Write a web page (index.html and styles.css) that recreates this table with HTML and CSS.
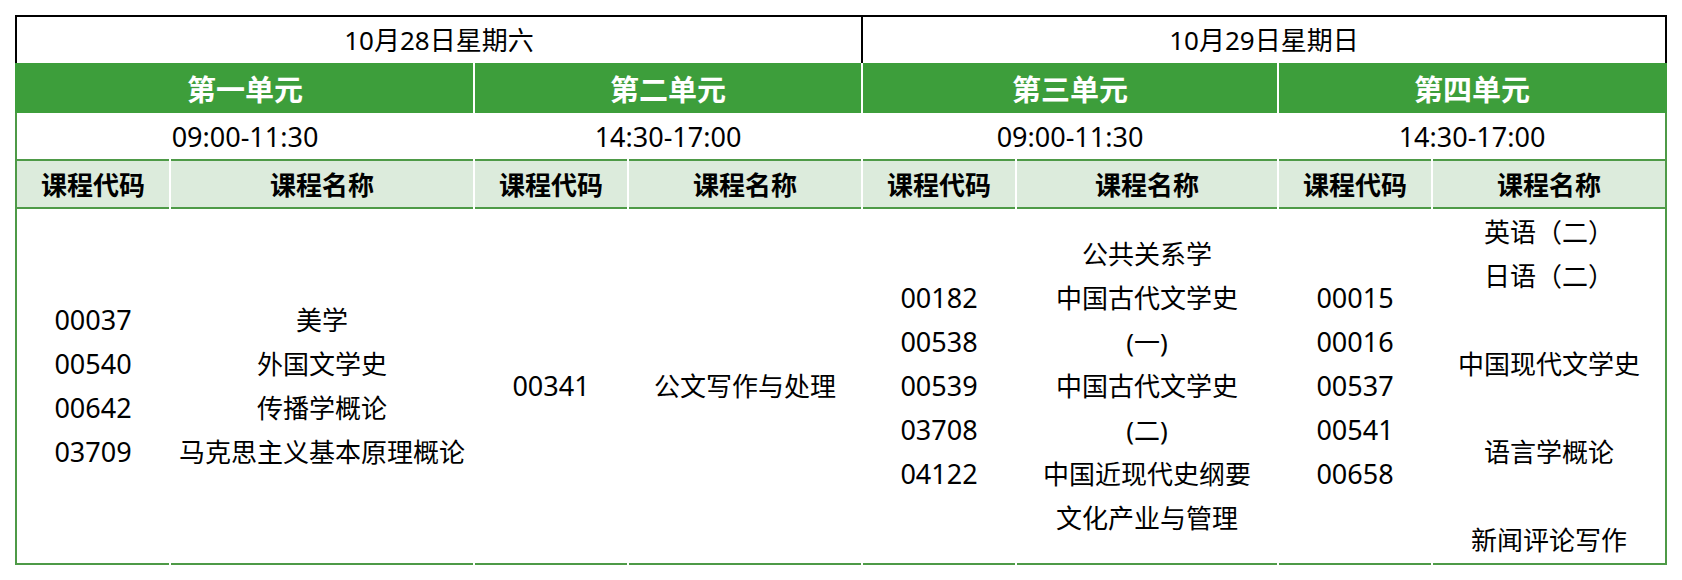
FILE: index.html
```html
<!DOCTYPE html>
<html lang="zh-CN">
<head>
<meta charset="utf-8">
<title>考试安排</title>
<link rel="stylesheet" href="styles.css">
</head>
<body>
<div class="sheet">
  <div class="row date-row">
    <div class="date-cell">10月28日星期六</div>
    <div class="date-cell">10月29日星期日</div>
  </div>
  <div class="row unit-row">
    <div class="unit u1">第一单元</div>
    <div class="unit u2">第二单元</div>
    <div class="unit u3">第三单元</div>
    <div class="unit u4">第四单元</div>
  </div>
  <div class="row time-row">
    <div class="time u1">09:00-11:30</div>
    <div class="time u2">14:30-17:00</div>
    <div class="time u3">09:00-11:30</div>
    <div class="time u4">14:30-17:00</div>
  </div>
  <div class="row head-row">
    <div class="head">课程代码</div>
    <div class="head">课程名称</div>
    <div class="head">课程代码</div>
    <div class="head">课程名称</div>
    <div class="head">课程代码</div>
    <div class="head">课程名称</div>
    <div class="head">课程代码</div>
    <div class="head">课程名称</div>
  </div>
  <div class="row body-row">
    <div class="cell code">
      <div class="line">00037</div>
      <div class="line">00540</div>
      <div class="line">00642</div>
      <div class="line">03709</div>
    </div>
    <div class="cell">
      <div class="line">美学</div>
      <div class="line">外国文学史</div>
      <div class="line">传播学概论</div>
      <div class="line">马克思主义基本原理概论</div>
    </div>
    <div class="cell code">
      <div class="line">00341</div>
    </div>
    <div class="cell">
      <div class="line">公文写作与处理</div>
    </div>
    <div class="cell code">
      <div class="line">00182</div>
      <div class="line">00538</div>
      <div class="line">00539</div>
      <div class="line">03708</div>
      <div class="line">04122</div>
    </div>
    <div class="cell">
      <div class="line">公共关系学</div>
      <div class="line">中国古代文学史</div>
      <div class="line">(一)</div>
      <div class="line">中国古代文学史</div>
      <div class="line">(二)</div>
      <div class="line">中国近现代史纲要</div>
      <div class="line">文化产业与管理</div>
    </div>
    <div class="cell code">
      <div class="line">00015</div>
      <div class="line">00016</div>
      <div class="line">00537</div>
      <div class="line">00541</div>
      <div class="line">00658</div>
    </div>
    <div class="cell">
      <div class="line">英语（二）</div>
      <div class="line">日语（二）</div>
      <div class="line blank"></div>
      <div class="line">中国现代文学史</div>
      <div class="line blank"></div>
      <div class="line">语言学概论</div>
      <div class="line blank"></div>
      <div class="line">新闻评论写作</div>
    </div>
  </div>
</div>
</body>
</html>
```

FILE: styles.css
```css
html, body {
  margin: 0;
  padding: 0;
  background: #ffffff;
}

body {
  font-family: "Noto Sans", "Noto Sans CJK SC", sans-serif;
  color: #000000;
}

.sheet {
  padding: 15px 0 0 15px;
  width: 1652px;
}

.row {
  display: grid;
  grid-template-columns: 152px 302px 152px 232px 152px 260px 152px 232px;
  column-gap: 2px;
  border-left: 2px solid #4e9a47;
  border-right: 2px solid #4e9a47;
}

/* date row */
.date-row {
  grid-template-columns: 844px 804px;
  column-gap: 0;
  border: 2px solid #000000;
  border-bottom: none;
  height: 46px;
}

.date-cell {
  display: flex;
  align-items: center;
  justify-content: center;
  font-size: 26px;
  line-height: 1;
}

.date-cell + .date-cell {
  border-left: 2px solid #000000;
}

/* unit row */
.unit-row {
  border-left-color: #3d9e3b;
  border-right-color: #3d9e3b;
  height: 50px;
}

.unit {
  display: flex;
  align-items: center;
  justify-content: center;
  background: #3d9e3b;
  color: #ffffff;
  font-size: 29px;
  font-weight: 700;
}

.u1 { grid-column: 1 / span 2; }
.u2 { grid-column: 3 / span 2; }
.u3 { grid-column: 5 / span 2; }
.u4 { grid-column: 7 / span 2; }

/* time row */
.time-row {
  height: 46px;
}

.time {
  display: flex;
  align-items: center;
  justify-content: center;
  font-size: 27px;
}

/* header row */
.head {
  display: flex;
  align-items: center;
  justify-content: center;
  height: 46px;
  background: #dcebdc;
  border-top: 2px solid #4e9a47;
  border-bottom: 2px solid #4e9a47;
  font-size: 26px;
  font-weight: 700;
}

/* body row */
.cell {
  display: flex;
  flex-direction: column;
  align-items: center;
  justify-content: center;
  height: 354px;
  border-bottom: 2px solid #4e9a47;
  font-size: 26px;
}

.cell.code {
  font-size: 27px;
}

.line {
  line-height: 44px;
  height: 44px;
  white-space: nowrap;
}
```
